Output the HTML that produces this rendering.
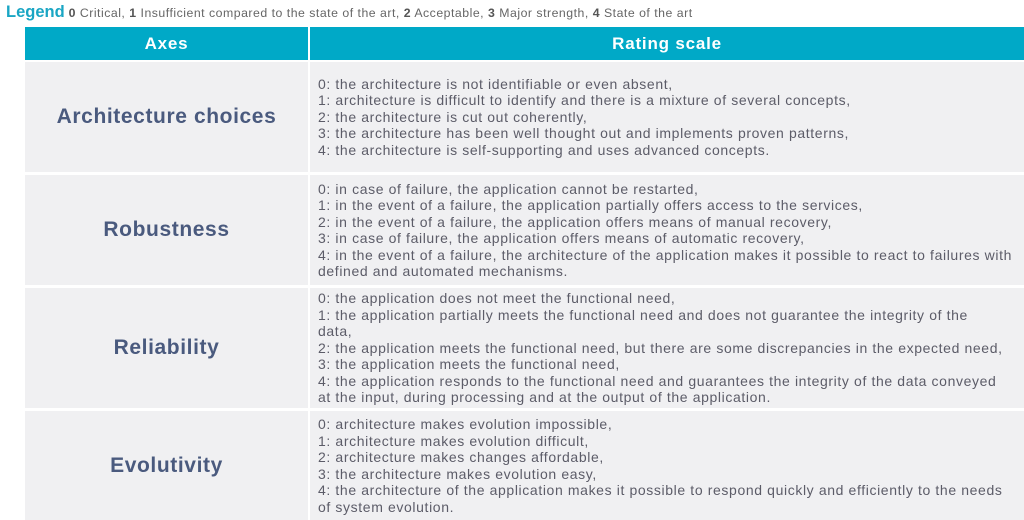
<!DOCTYPE html>
<html><head><meta charset="utf-8"><style>
*{margin:0;padding:0;box-sizing:border-box}
body{width:1024px;height:520px;background:#fff;position:relative;overflow:hidden;font-family:"Liberation Sans",sans-serif}
.leg{position:absolute;left:6px;top:3px;font-size:12.3px;color:#666;white-space:nowrap;letter-spacing:0.5px}
.leg b.t{color:#1aa6c4;font-size:16.5px;letter-spacing:0}
.leg b{color:#555}
.hd{position:absolute;top:27px;height:33px;background:#00a9c7;color:#fff;font-weight:bold;font-size:17px;text-align:center;line-height:33px;letter-spacing:0.8px}
.row{position:absolute;background:#f0f0f2}
.lab{position:absolute;left:25px;width:283px;display:flex;align-items:center;justify-content:center;color:#4a5a7e;font-weight:bold;font-size:21px;letter-spacing:0.6px}
.txt{position:absolute;left:318px;width:706px;display:flex;align-items:center;color:#5c5c68;font-size:14px;line-height:16.5px;letter-spacing:0.62px;white-space:nowrap}
</style></head><body>
<div class="leg"><b class="t">Legend</b> <b>0</b> Critical, <b>1</b> Insufficient compared to the state of the art, <b>2</b> Acceptable, <b>3</b> Major strength, <b>4</b> State of the art</div>
<div class="hd" style="left:25px;width:283px">Axes</div>
<div class="hd" style="left:310px;width:714px">Rating scale</div>

<div class="row" style="left:25px;width:283px;top:62px;height:110px"></div>
<div class="row" style="left:310px;width:714px;top:62px;height:110px"></div>
<div class="row" style="left:25px;width:283px;top:175px;height:110px"></div>
<div class="row" style="left:310px;width:714px;top:175px;height:110px"></div>
<div class="row" style="left:25px;width:283px;top:288px;height:120px"></div>
<div class="row" style="left:310px;width:714px;top:288px;height:120px"></div>
<div class="row" style="left:25px;width:283px;top:411px;height:109px"></div>
<div class="row" style="left:310px;width:714px;top:411px;height:109px"></div>

<div class="lab" style="top:62px;height:110px">Architecture choices</div>
<div class="txt" style="top:62px;height:110px"><div>0: the architecture is not identifiable or even absent,<br>1: architecture is difficult to identify and there is a mixture of several concepts,<br>2: the architecture is cut out coherently,<br>3: the architecture has been well thought out and implements proven patterns,<br>4: the architecture is self-supporting and uses advanced concepts.</div></div>

<div class="lab" style="top:175px;height:110px">Robustness</div>
<div class="txt" style="top:175px;height:110px"><div>0: in case of failure, the application cannot be restarted,<br>1: in the event of a failure, the application partially offers access to the services,<br>2: in the event of a failure, the application offers means of manual recovery,<br>3: in case of failure, the application offers means of automatic recovery,<br>4: in the event of a failure, the architecture of the application makes it possible to react to failures with<br>defined and automated mechanisms.</div></div>

<div class="lab" style="top:288px;height:120px">Reliability</div>
<div class="txt" style="top:288px;height:120px"><div>0: the application does not meet the functional need,<br>1: the application partially meets the functional need and does not guarantee the integrity of the<br>data,<br>2: the application meets the functional need, but there are some discrepancies in the expected need,<br>3: the application meets the functional need,<br>4: the application responds to the functional need and guarantees the integrity of the data conveyed<br>at the input, during processing and at the output of the application.</div></div>

<div class="lab" style="top:411px;height:109px">Evolutivity</div>
<div class="txt" style="top:411px;height:109px"><div>0: architecture makes evolution impossible,<br>1: architecture makes evolution difficult,<br>2: architecture makes changes affordable,<br>3: the architecture makes evolution easy,<br>4: the architecture of the application makes it possible to respond quickly and efficiently to the needs<br>of system evolution.</div></div>
</body></html>
